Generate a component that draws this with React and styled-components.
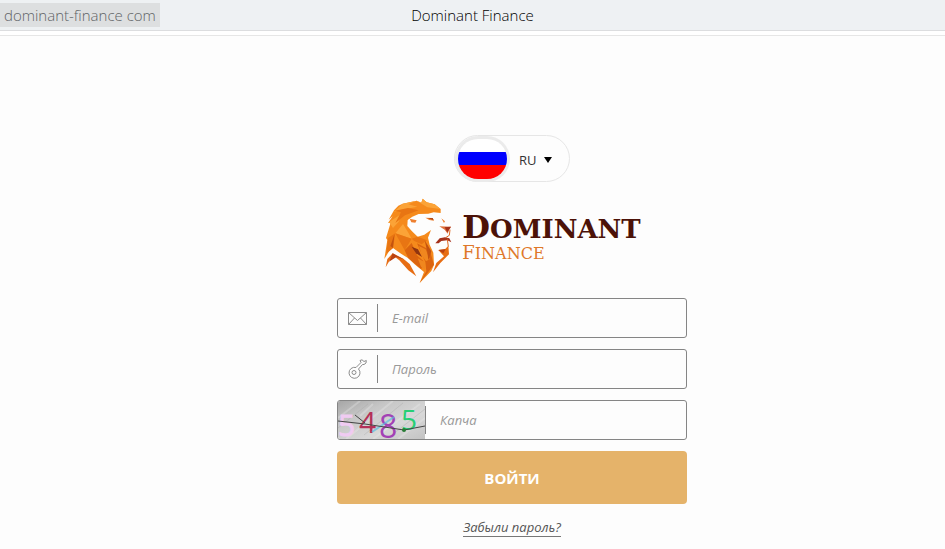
import React from "react";
import styled, { createGlobalStyle } from "styled-components";

const GlobalStyle = createGlobalStyle`
  * { box-sizing: border-box; }
  body {
    margin: 0;
    background: #fdfdfd;
    font-family: "Open Sans", "Noto Sans", sans-serif;
  }
`;

const BrowserBar = styled.header`
  display: grid;
  grid-template-columns: 1fr auto 1fr;
  align-items: center;
  height: 31px;
  padding-bottom: 1px;
  background: #eef1f3;
  border-bottom: 1px solid #dcdddf;
`;

const BarText = styled.span`
  font-size: 15px;
  font-weight: 300;
  line-height: 24px;
`;

const Address = styled(BarText)`
  justify-self: start;
  padding: 0 4px;
  background: #dddfe0;
  color: #5f6366;
`;

const PageTitle = styled(BarText)`
  color: #000;
`;

const BarEdge = styled.div`
  height: 5px;
  background: #fff;
  border-bottom: 1px solid #e6e6e6;
`;

const Main = styled.main`
  display: flex;
  flex-direction: column;
  align-items: center;
  padding: 99px 0 0 79px;
`;

const Language = styled.label`
  display: flex;
  align-items: center;
  width: 116px;
  height: 47px;
  border: 1px solid #e6e6e6;
  border-radius: 24px;
`;

const FlagFrame = styled.span`
  display: flex;
  padding: 3px;
  border-radius: 24px;
  background: #ebebeb;
`;

const Flag = styled.svg`
  display: block;
  width: 49px;
  height: 40px;
  border-radius: 20px;
`;

const SelectWrap = styled.span`
  display: flex;
  flex: 1;
  align-items: center;
  padding: 3px 17px 0 9px;
`;

const LanguageSelect = styled.select`
  flex: 1;
  min-width: 0;
  padding: 0;
  border: 0;
  background: transparent;
  appearance: none;
  color: #333;
  font-family: inherit;
  font-size: 13px;
  line-height: 20px;
`;

const Caret = styled.svg`
  width: 8px;
  height: 6px;
`;

const Brand = styled.div`
  display: flex;
  align-items: flex-start;
  gap: 9px;
  margin-top: 14px;
`;

const Lion = styled.svg`
  display: block;
  width: 70px;
  height: 88px;
`;

const BrandText = styled.div`
  padding-top: 15px;
  font-family: "DejaVu Serif", serif;
`;

const BrandName = styled.div`
  color: #4c1208;
  font-size: 26px;
  font-weight: 700;
  line-height: 32px;
  &::first-letter { font-size: 32px; }
`;

const BrandSub = styled.div`
  color: #df7829;
  font-size: 16px;
  line-height: 16px;
  &::first-letter { font-size: 18px; }
`;

const Form = styled.form`
  display: flex;
  flex-direction: column;
  align-items: center;
  gap: 11px;
  width: 100%;
  max-width: 350px;
  margin-top: 14px;
`;

const Field = styled.label`
  display: flex;
  align-items: center;
  width: 100%;
  height: 40px;
  border: 1px solid #858585;
  border-radius: 3px;
  overflow: hidden;
`;

const FieldIcon = styled.svg`
  flex: none;
  width: 20px;
  height: 20px;
  margin: 0 10px 0 9px;
  fill: none;
  stroke: #8c8c8c;
`;

const Captcha = styled.svg`
  flex: none;
  width: 87px;
  height: 38px;
`;

const Input = styled.input`
  flex: 1;
  min-width: 0;
  height: 28px;
  padding: 0 14px;
  border: 0;
  border-left: 1px solid #858585;
  outline: 0;
  background: transparent;
  color: #444;
  font-family: inherit;
  font-size: 13px;
  font-style: italic;
  &::placeholder { color: #999; opacity: 1; }
`;

const Submit = styled.button`
  width: 100%;
  height: 53px;
  border: 0;
  border-radius: 4px;
  background: #e5b36a;
  color: #fff;
  font-family: inherit;
  font-size: 15px;
  font-weight: 700;
`;

const Forgot = styled.a`
  margin-top: 4px;
  border-bottom: 1px solid #777;
  color: #555;
  font-size: 13px;
  font-style: italic;
  line-height: 17px;
  text-decoration: none;
`;

function LionMark() {
  return (
    <Lion viewBox="18 18 210 264" aria-hidden="true">
      <path fill="#f58a1c" d="M137 26 L149 37 L173 43 L191 57 L191 69 L170 67 L154 71 L125 72 L106 80 L92 90 L91 108 L105 124 L122 140 L142 134 L162 120 L153 143 L158 164 L169 188 L171 224 L163 243 L128 279 L141 246 L112 222 L94 205 L70 190 L48 174 L36 184 L22 207 L31 150 L27 144 L41 98 L33 99 L47 79 L35 89 L51 61 L64 47 L77 41 L119 32 L133 38 Z" />
      <path fill="#fba337" d="M137 26 L149 37 L173 43 L190 57 L151 52 L119 32 L133 38 Z M77 41 L119 32 L94 43 L121 50 L82 58 L51 65 Z M36 96 L77 69 L65 95 L48 114 Z M55 130 L78 102 L94 128 L104 146 Z" />
      <path fill="#e87513" d="M53 62 L93 54 L125 61 L84 76 L55 99 L72 67 Z M33 144 L55 130 L48 174 L28 191 Z M55 130 L104 146 L83 181 Z M104 146 L122 140 L150 151 L134 163 L112 153 Z" />
      <path fill="#db640f" d="M83 181 L104 159 L120 196 L139 213 L133 238 L94 205 Z M120 160 L158 180 L171 224 L128 279 L148 244 L145 216 Z" />
      <path fill="#f0871f" d="M122 205 L143 216 L145 239 L132 230 Z M126 168 L146 178 L158 208 L147 214 L134 196 Z" />
      <path fill="#8f3411" d="M104 170 L123 178 L135 201 L117 190 Z" />
      <path fill="#c4530f" d="M52 134 L48 174 L40 168 Z M143 151 L163 184 L154 211 L151 185 Z" />
      <path fill="#e76d13" d="M47 190 L79 206 L98 222 L118 259 L94 241 L67 211 L47 196 L26 232 L31 207 Z M184 180 L204 178 L214 167 L216 193 L190 219 L168 247 L178 219 L201 199 Z" />
      <path fill="#ba4212" d="M184 180 L206 177 L199 190 Z M47 190 L80 208 L58 201 L36 215 Z" />
      <path fill="#ee8030" d="M98 86 L119 91 L115 98 L103 97 Z M145 83 L167 84 L171 92 L157 90 Z M193 85 L204 94 L201 99 Z" />
      <path fill="#b04818" d="M152 84 L167 84 L170 91 Z" />
      <path fill="#e0713a" d="M187 109 L222 110 L216 121 L212 131 L203 119 Z" />
      <path fill="#a5311b" d="M203 112 L222 110 L215 121 L211 127 Z M175 160 L188 145 L204 142 L217 145 L223 157 L211 151 L193 153 L185 160 Z" />
      <path fill="none" stroke="#df6a22" strokeWidth="3" d="M219 119 L217 136 L206 143 M211 148 L214 170" />
    </Lion>
  );
}

export default function App() {
  return (
    <>
      <GlobalStyle />
      <BrowserBar>
        <Address>dominant-finance com</Address>
        <PageTitle>Dominant Finance</PageTitle>
      </BrowserBar>
      <BarEdge />
      <Main>
        <Language>
          <FlagFrame>
            <Flag viewBox="0 0 49 40" role="img" aria-label="Россия">
              <path fill="#fff" d="M0 0h49v13H0z" />
              <path fill="#00f" d="M0 13h49v13H0z" />
              <path fill="#f00" d="M0 26h49v14H0z" />
            </Flag>
          </FlagFrame>
          <SelectWrap>
            <LanguageSelect aria-label="Язык" defaultValue="ru">
              <option value="ru">RU</option>
            </LanguageSelect>
            <Caret viewBox="0 0 8 6"><path d="M0 0h8L4 6z" /></Caret>
          </SelectWrap>
        </Language>

        <Brand>
          <LionMark />
          <BrandText>
            <BrandName>DOMINANT</BrandName>
            <BrandSub>FINANCE</BrandSub>
          </BrandText>
        </Brand>

        <Form onSubmit={(e) => e.preventDefault()}>
          <Field>
            <FieldIcon viewBox="0 0 20 20">
              <path d="M1.5 4.5h18v12h-18zM1.5 4.5l9 8 9-8M1.5 16.5l6-6.500M19.500 16.500l-6-6.500" />
            </FieldIcon>
            <Input type="email" placeholder="E-mail" aria-label="E-mail" />
          </Field>
          <Field>
            <FieldIcon viewBox="0 0 20 20">
              <path d="M9 8.500L14 3.500L13 1.500L15 .8L17 2.500L19.300 1.500L19 4L17 5.500L15.500 5.500L11.500 10A5.500 5.500 0 1 1 9 8.500Z" />
              <circle cx="7" cy="13.500" r="2" />
            </FieldIcon>
            <Input type="password" placeholder="Пароль" aria-label="Пароль" />
          </Field>
          <Field>
            <Captcha viewBox="0 0 87 38" role="img" aria-label="Капча">
              <defs>
                <linearGradient id="noise" x2="1" y2="1">
                  <stop stopColor="#a6a6a6" />
                  <stop offset=".3" stopColor="#c6c6c6" />
                  <stop offset=".65" stopColor="#d8d8d8" />
                  <stop offset="1" stopColor="#c3c3c3" />
                </linearGradient>
              </defs>
              <path fill="url(#noise)" d="M0 0h87v38H0z" />
              <path fill="none" stroke="#eee" strokeWidth="2" opacity=".3" d="M0 17L22 0M8 38L55 0M35 38L82 3M60 38L87 17M22 15L35 3" />
              <path fill="none" stroke="#aaa" opacity=".4" d="M0 27L30 3M26 34L65 2M50 37L87 8" />
              <g fontFamily="Open Sans, sans-serif">
                <text x="0" y="35" fontSize="30" fill="#f0cbf2" stroke="#f0cbf2">5</text>
                <text x="21" y="32" fontSize="30" fill="#b43058">4</text>
                <text x="41" y="37" fontSize="32" fill="#a341b5">8</text>
                <text x="63" y="29" fontSize="28" fill="#27cf75">5</text>
              </g>
              <path stroke="#5bbfe0" strokeWidth="2" opacity=".7" d="M34 31L56 16" />
              <path fill="none" stroke="#444" d="M0 20L27 23L66 29L87 25M17 14L27 22" />
              <circle cx="66" cy="29" r="2" fill="#287d35" />
            </Captcha>
            <Input type="text" placeholder="Капча" aria-label="Капча" />
          </Field>
          <Submit type="submit">ВОЙТИ</Submit>
          <Forgot href="#forgot">Забыли пароль?</Forgot>
        </Form>
      </Main>
    </>
  );
}
